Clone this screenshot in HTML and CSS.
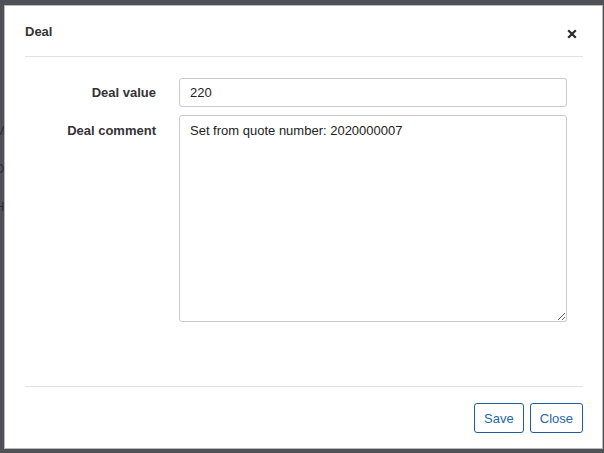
FILE: index.html
```html
<!DOCTYPE html>
<html>
<head>
<meta charset="utf-8">
<link rel="stylesheet" href="styles.css">
</head>
<body>
<div class="backdrop">
  <div class="ghost">
    <span class="g1">M</span>
    <span class="g2">D</span>
    <span class="g3">H</span>
  </div>
  <div class="modal">
    <div class="modal-header">
      <h4 class="modal-title">Deal</h4>
      <button class="close" aria-label="Close">
        <svg width="10" height="10" viewBox="0 0 10 10"><path d="M1.2 1.2 L8.8 8.8 M8.8 1.2 L1.2 8.8" stroke="#2b2b2b" stroke-width="2.2" stroke-linecap="butt"/></svg>
      </button>
    </div>
    <div class="modal-body">
      <div class="form-row">
        <label class="label" for="dv">Deal value</label>
        <input id="dv" class="control" type="text" value="220">
      </div>
      <div class="form-row">
        <label class="label label-top" for="dc">Deal comment</label>
        <textarea id="dc" class="control area">Set from quote number: 2020000007</textarea>
      </div>
    </div>
    <div class="modal-footer">
      <button class="btn">Save</button>
      <button class="btn">Close</button>
    </div>
  </div>
</div>
</body>
</html>
```

FILE: styles.css
```css
* { box-sizing: border-box; }
html, body { margin: 0; padding: 0; }
body {
  width: 604px;
  height: 453px;
  overflow: hidden;
  font-family: "Liberation Sans", Arial, sans-serif;
  font-size: 13px;
  color: #333;
  background: #4f5156;
}
.backdrop {
  position: relative;
  width: 604px;
  height: 453px;
  padding: 5px 0 0 4px;
  background: #4f5156;
}
.ghost { position: absolute; left: 0; top: 0; width: 4px; height: 453px; overflow: hidden; }
.ghost span { position: absolute; left: -5px; color: #2a2c30; font-size: 13px; }
.g1 { top: 123px; }
.g2 { top: 161px; }
.g3 { top: 199px; }
.modal {
  position: relative;
  width: 599px;
  height: 444px;
  background: #fff;
  border: 1px solid #b9b9b9;
  padding: 0 19px 0 20px;
  display: flex;
  flex-direction: column;
}
.modal-header {
  height: 51px;
  border-bottom: 1px solid #e2e2e2;
  display: flex;
  align-items: flex-start;
  justify-content: space-between;
  padding-top: 18px;
}
.modal-title {
  margin: 0;
  font-size: 13px;
  font-weight: bold;
  line-height: 15px;
  color: #333;
}
.close {
  border: 0;
  background: none;
  padding: 0;
  margin: 5px 6px 0 0;
  width: 10px;
  height: 10px;
  display: block;
  cursor: pointer;
}
.close svg { display: block; }
.modal-body {
  flex: 1;
  padding: 21px 16px 0 0;
  display: flex;
  flex-direction: column;
  gap: 8px;
}
.form-row {
  display: grid;
  grid-template-columns: 131px 1fr;
  column-gap: 23px;
  align-items: center;
}
.label {
  text-align: right;
  font-weight: bold;
  line-height: 15px;
  color: #333;
}
.label-top { align-self: start; padding-top: 8px; }
.control {
  display: block;
  width: 100%;
  height: 29px;
  border: 1px solid #cacaca;
  border-radius: 3px;
  padding: 0 10px;
  font-family: "Liberation Sans", Arial, sans-serif;
  font-size: 13px;
  color: #222;
  background: #fff;
  outline: none;
}
.area {
  height: 207px;
  padding: 7px 10px;
  line-height: 15px;
  resize: vertical;
}
.modal-footer {
  height: 62px;
  border-top: 1px solid #e2e2e2;
  display: flex;
  justify-content: flex-end;
  align-items: flex-start;
  gap: 6px;
  padding-top: 16px;
}
.btn {
  height: 30px;
  padding: 0 9px;
  border: 1px solid #1e5e9c;
  border-radius: 3px;
  background: #fff;
  color: #2466a8;
  font-family: "Liberation Sans", Arial, sans-serif;
  font-size: 13px;
}
```
